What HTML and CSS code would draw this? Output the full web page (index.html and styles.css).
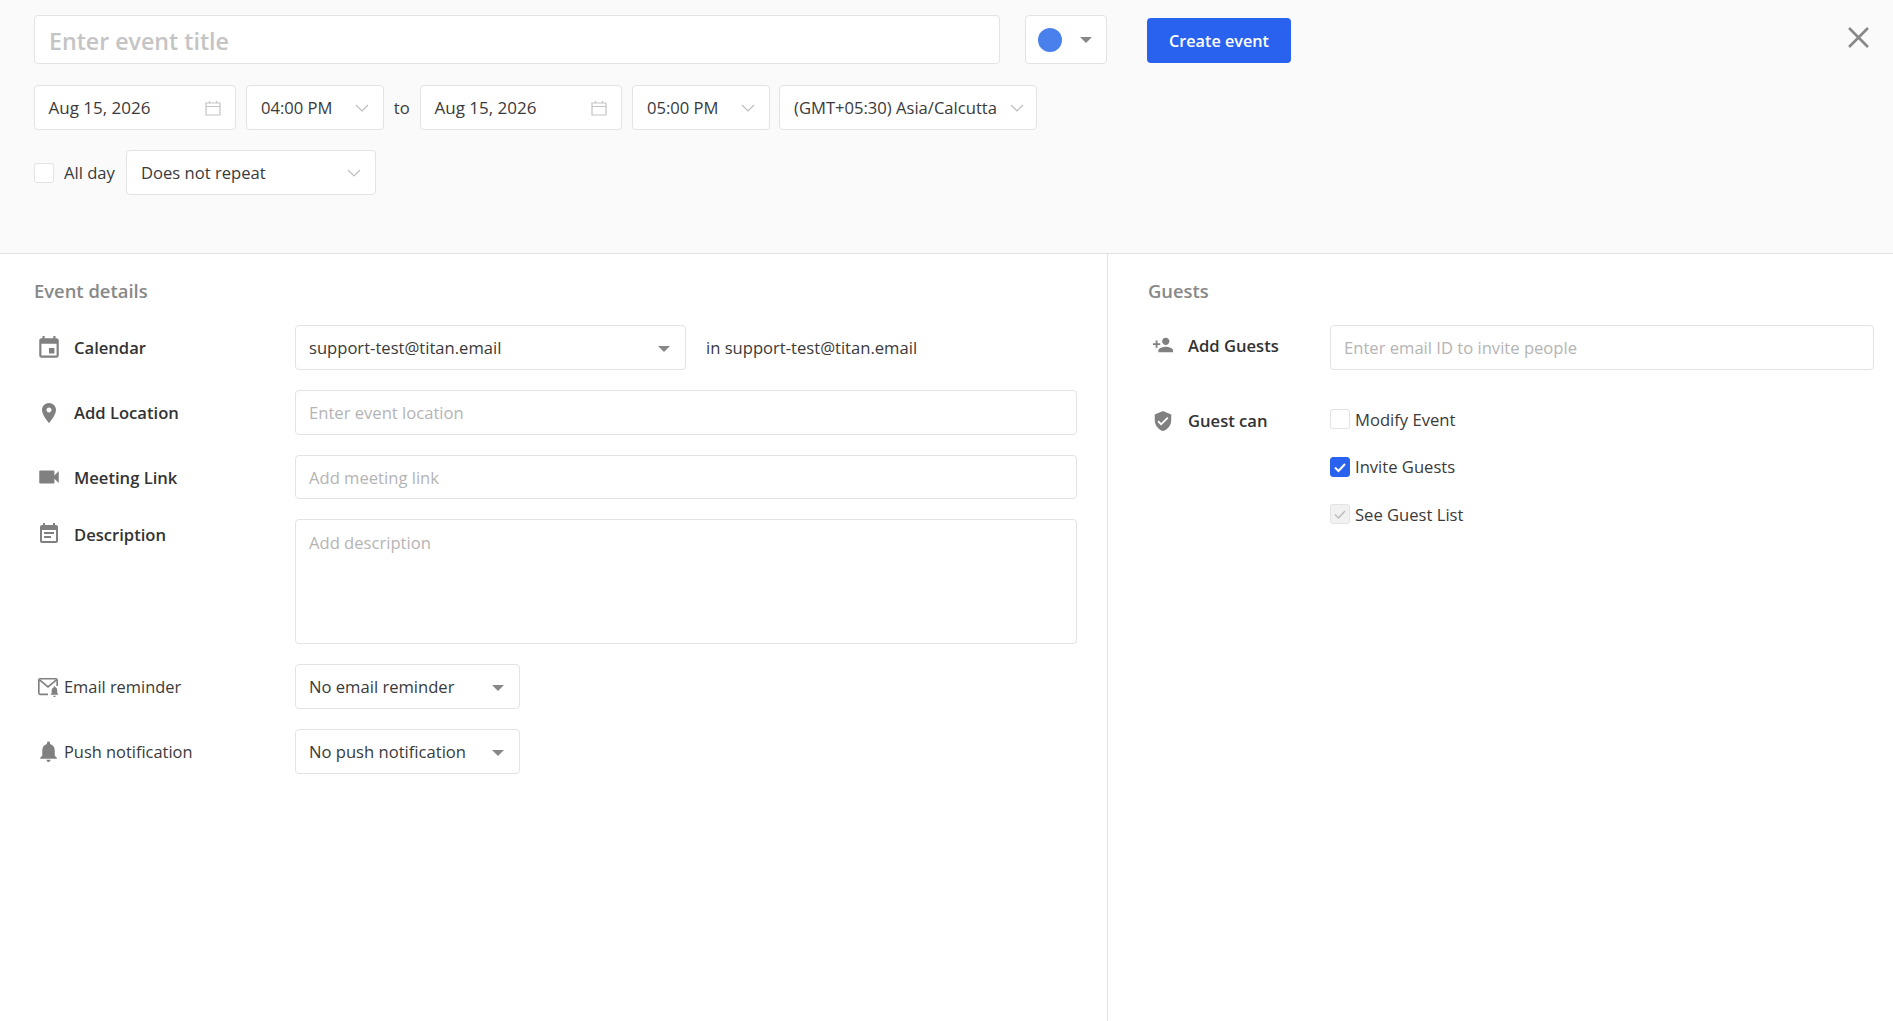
FILE: index.html
```html
<!DOCTYPE html>
<html lang="en">
  <head>
    <meta charset="UTF-8" />
    <meta name="viewport" content="width=device-width, initial-scale=1.0" />
    <title>Create Event</title>
    <link rel="stylesheet" href="styles.css">
  </head>
  <body>
    <header class="top">
      <div class="top-row title-row">
        <input class="field title-input" type="text" placeholder="Enter event title" />
        <div class="field color-picker">
          <span class="color-dot"></span>
          <span class="caret"></span>
        </div>
        <button class="create-btn" type="button">Create event</button>
        <svg class="close-icon" viewBox="0 0 20 20"><path d="M1 1l18 18M19 1L1 19" /></svg>
      </div>

      <div class="top-row date-row">
        <div class="field picker date-picker">
          <span>Aug 15, 2026</span>
          <svg class="cal-icon" viewBox="0 0 16 16"><path d="M1 3h14v12H1zM1 6.5h14M4.5 1v2M11.5 1v2" /></svg>
        </div>
        <div class="field picker time-picker">
          <span>04:00 PM</span>
          <svg class="chevron" viewBox="0 0 14 8"><path d="M1 1l6 6 6-6" /></svg>
        </div>
        <span class="to-label">to</span>
        <div class="field picker date-picker">
          <span>Aug 15, 2026</span>
          <svg class="cal-icon" viewBox="0 0 16 16"><path d="M1 3h14v12H1zM1 6.5h14M4.5 1v2M11.5 1v2" /></svg>
        </div>
        <div class="field picker time-picker">
          <span>05:00 PM</span>
          <svg class="chevron" viewBox="0 0 14 8"><path d="M1 1l6 6 6-6" /></svg>
        </div>
        <div class="field picker zone-picker">
          <span>(GMT+05:30) Asia/Calcutta</span>
          <svg class="chevron" viewBox="0 0 14 8"><path d="M1 1l6 6 6-6" /></svg>
        </div>
      </div>

      <div class="top-row repeat-row">
        <span class="checkbox"></span>
        <span class="allday-label">All day</span>
        <div class="field picker repeat-picker">
          <span>Does not repeat</span>
          <svg class="chevron" viewBox="0 0 14 8"><path d="M1 1l6 6 6-6" /></svg>
        </div>
      </div>
    </header>

    <main class="content">
      <section class="details">
        <h2 class="section-title">Event details</h2>
        <div class="rows">
          <div class="row">
            <div class="row-label">
              <svg class="row-icon" viewBox="0 0 24 24"><path d="M17 12h-5v5h5v-5zM16 1v2H8V1H6v2H5c-1.11 0-1.99.9-1.99 2L3 19c0 1.1.89 2 2 2h14c1.1 0 2-.9 2-2V5c0-1.1-.9-2-2-2h-1V1h-2zm3 18H5V8h14v11z" /></svg>
              <span>Calendar</span>
            </div>
            <div class="field select calendar-select">
              <span>support-test@titan.email</span>
              <span class="caret"></span>
            </div>
            <span class="calendar-note">in support-test@titan.email</span>
          </div>

          <div class="row">
            <div class="row-label">
              <svg class="row-icon row-icon-small" viewBox="0 0 24 24"><path d="M12 2C8.13 2 5 5.13 5 9c0 5.25 7 13 7 13s7-7.75 7-13c0-3.87-3.13-7-7-7zm0 9.5c-1.38 0-2.5-1.12-2.5-2.5s1.12-2.5 2.5-2.5 2.5 1.12 2.5 2.5-1.12 2.5-2.5 2.5z" /></svg>
              <span>Add Location</span>
            </div>
            <input class="field text-input" type="text" placeholder="Enter event location" />
          </div>

          <div class="row row-short">
            <div class="row-label">
              <svg class="row-icon" viewBox="0 0 24 24"><path d="M17 10.5V7c0-.55-.45-1-1-1H4c-.55 0-1 .45-1 1v10c0 .55.45 1 1 1h12c.55 0 1-.45 1-1v-3.5l4 4v-11l-4 4z" /></svg>
              <span>Meeting Link</span>
            </div>
            <input class="field text-input" type="text" placeholder="Add meeting link" />
          </div>

          <div class="row row-top">
            <div class="row-label">
              <svg class="row-icon row-icon-small" viewBox="0 0 24 24"><path d="M17 10H7v2h10v-2zm2-7h-1V1h-2v2H8V1H6v2H5c-1.11 0-1.99.9-1.99 2L3 19c0 1.1.89 2 2 2h14c1.1 0 2-.9 2-2V5c0-1.1-.9-2-2-2zm0 16H5V8h14v11zm-5-5H7v2h7v-2z" /></svg>
              <span>Description</span>
            </div>
            <textarea class="field description" placeholder="Add description"></textarea>
          </div>

          <div class="row">
            <div class="row-label row-label-plain">
              <svg class="mail-icon" viewBox="0 0 24 24">
                <path class="mail-outline" d="M12 20H3.5A1.5 1.5 0 0 1 2 18.5V4.500A1.500 1.500 0 0 1 3.500 3h17A1.500 1.500 0 0 1 22 4.500V11" />
                <path class="mail-outline" d="M2.500 4l9.500 8 9.500-8" />
                <path d="M19 23a1.500 1.500 0 0 0 1.500-1.500h-3A1.500 1.500 0 0 0 19 23zm4-2.500v-1l-1-1v-3c0-1.700-1-3-2.200-3.400V12a.8.8 0 0 0-1.600 0v.6C17 13 16 14.300 16 16v2.500l-1 1v1z" />
              </svg>
              <span>Email reminder</span>
            </div>
            <div class="field select reminder-select">
              <span>No email reminder</span>
              <span class="caret"></span>
            </div>
          </div>

          <div class="row">
            <div class="row-label row-label-plain">
              <svg class="bell-icon" viewBox="0 0 24 24"><path d="M12 22c1.100 0 2-.9 2-2h-4c0 1.100.89 2 2 2zm6-6v-5c0-3.070-1.640-5.640-4.500-6.320V4c0-.83-.67-1.500-1.500-1.500s-1.500.67-1.500 1.500v.68C7.630 5.360 6 7.920 6 11v5l-2 2v1h16v-1l-2-2z" /></svg>
              <span>Push notification</span>
            </div>
            <div class="field select reminder-select">
              <span>No push notification</span>
              <span class="caret"></span>
            </div>
          </div>
        </div>
      </section>

      <section class="guests">
        <h2 class="section-title">Guests</h2>
        <div class="row">
          <div class="guest-label add-guests-label">
            <svg class="guest-icon" viewBox="0 0 24 24"><path d="M15 12c2.210 0 4-1.790 4-4s-1.790-4-4-4-4 1.790-4 4 1.790 4 4 4zm-9-2V7H4v3H1v2h3v3h2v-3h3v-2H6zm9 4c-2.670 0-8 1.340-8 4v2h16v-2c0-2.660-5.330-4-8-4z" /></svg>
            <span>Add Guests</span>
          </div>
          <input class="field text-input" type="text" placeholder="Enter email ID to invite people" />
        </div>

        <div class="guest-can">
          <div class="guest-label">
            <svg class="guest-icon" viewBox="0 0 24 24"><path d="M12 1L3 5v6c0 5.550 3.840 10.740 9 12 5.160-1.260 9-6.450 9-12V5l-9-4zm-2 16l-4-4 1.410-1.410L10 14.170l6.590-6.590L18 9l-8 8z" /></svg>
            <span>Guest can</span>
          </div>
          <div class="options">
            <div class="option">
              <span class="checkbox"></span>
              <span>Modify Event</span>
            </div>
            <div class="option">
              <span class="checkbox checkbox-on">
                <svg viewBox="0 0 20 20"><path d="M5 10.500l3.500 3.500L15 7" /></svg>
              </span>
              <span>Invite Guests</span>
            </div>
            <div class="option">
              <span class="checkbox checkbox-off">
                <svg viewBox="0 0 20 20"><path d="M5 10.500l3.500 3.500L15 7" /></svg>
              </span>
              <span>See Guest List</span>
            </div>
          </div>
        </div>
      </section>
    </main>
  </body>
</html>
```

FILE: styles.css
```css
* {
  box-sizing: border-box;
}
body {
  font-family: "Open Sans", "Noto Sans", sans-serif;
  font-size: 16.6px;
  color: #3a3a3a;
  background-color: white;
  margin: 0;
  height: 1021px;
  display: flex;
  flex-direction: column;
  overflow: hidden;
}
.field {
  background-color: white;
  border: 1px solid #e3e3e3;
  border-radius: 4px;
  font-family: inherit;
  font-size: 16.6px;
  color: #3a3a3a;
}
.field::placeholder {
  color: #b4b4b4;
  opacity: 1;
}
.field:focus {
  outline: none;
}

/* top section */
.top {
  height: 254px;
  flex: none;
  background-color: #fafafa;
  border-bottom: 1px solid #e3e3e3;
  padding: 15px 24px 0 34px;
}
.top-row {
  display: flex;
  align-items: center;
}
.title-input {
  width: 966px;
  height: 49px;
  padding: 2px 14px 0;
  font-size: 23.2px;
  font-weight: 600;
}
.title-input::placeholder {
  color: #c4c4c4;
}
.color-picker {
  width: 82px;
  height: 49px;
  margin-left: 25px;
  display: flex;
  align-items: center;
  padding-left: 12px;
}
.color-dot {
  width: 24px;
  height: 24px;
  border-radius: 50%;
  background-color: #4a80ec;
  margin-right: 18px;
}
.caret {
  width: 0;
  height: 0;
  flex: none;
  margin-top: 3px;
  border-left: 6px solid transparent;
  border-right: 6px solid transparent;
  border-top: 6px solid #888;
}
.color-picker .caret {
  margin-top: 0;
}
.create-btn {
  width: 144px;
  height: 45px;
  margin-left: 40px;
  margin-top: 2px;
  background-color: #2962ee;
  color: white;
  border: none;
  border-radius: 4px;
  font-family: inherit;
  font-size: 16.2px;
  font-weight: 600;
}
.close-icon {
  width: 21px;
  height: 21px;
  margin-left: auto;
  margin-top: -5px;
  fill: none;
  stroke: #888;
  stroke-width: 2.5;
}
.date-row {
  margin-top: 21px;
}
.picker {
  height: 45px;
  display: flex;
  align-items: center;
  justify-content: space-between;
  padding: 0 14px;
}
.date-picker {
  width: 201.5px;
  font-size: 17px;
  padding-left: 13.5px;
}
.time-picker {
  width: 137.5px;
  margin-left: 10.5px;
  padding-right: 14px;
}
.to-label {
  width: 36.5px;
  text-align: center;
}
.zone-picker {
  width: 258px;
  margin-left: 9.5px;
  padding-right: 12px;
  padding-left: 14px;
}
.cal-icon {
  width: 16px;
  height: 16px;
  fill: none;
  stroke: #c4c4c4;
  stroke-width: 1.2;
}
.chevron {
  width: 14px;
  height: 8px;
  fill: none;
  stroke: #bdbdbd;
  stroke-width: 1.2;
}
.repeat-row {
  margin-top: 20px;
}
.checkbox {
  width: 20px;
  height: 20px;
  flex: none;
  background-color: white;
  border: 1px solid #e3e3e3;
  border-radius: 3px;
}
.checkbox svg {
  display: block;
  width: 20px;
  height: 20px;
  margin: -1px;
  fill: none;
  stroke: white;
  stroke-width: 2;
}
.checkbox-on {
  background-color: #2962ee;
  border-color: #2962ee;
}
.checkbox-off {
  background-color: #f1f1f1;
}
.checkbox-off svg {
  stroke: #b8b8b8;
  stroke-width: 1.4;
}
.allday-label {
  margin-left: 10px;
  width: 62px;
}
.repeat-picker {
  width: 250px;
  padding-right: 14px;
}

/* lower section */
.content {
  flex: 1;
  display: flex;
}
.details {
  width: 1108px;
  flex: none;
  border-right: 1px solid #e3e3e3;
  padding: 25px 0 0 34px;
}
.section-title {
  margin: 0 0 23px;
  height: 23px;
  line-height: 23px;
  font-size: 18.4px;
  font-weight: 600;
  color: #888;
}
.rows {
  display: flex;
  flex-direction: column;
  gap: 20px;
}
.row {
  display: flex;
  align-items: center;
  min-height: 45px;
}
.row-short {
  min-height: 44px;
}
.row-short .text-input {
  height: 44px;
}
.row-top {
  align-items: flex-start;
}
.row-label {
  width: 261px;
  flex: none;
  display: flex;
  align-items: center;
  gap: 12px;
  font-weight: 600;
  color: #333;
  padding-left: 2px;
}
.row-top .row-label {
  padding-top: 3px;
}
.row-label-plain {
  font-weight: 400;
  font-size: 16.4px;
  color: #3a3a3a;
  gap: 4px;
  padding-left: 3px;
}
.row-icon {
  width: 26px;
  height: 26px;
  flex: none;
  fill: #808080;
}
.row-icon-small {
  width: 24px;
  height: 24px;
  margin: 0 1px;
}
.mail-icon {
  width: 22px;
  height: 22px;
  margin-right: 1px;
  flex: none;
  fill: #808080;
}
.mail-outline {
  fill: none;
  stroke: #808080;
  stroke-width: 1.8;
}
.bell-icon {
  width: 25px;
  height: 25px;
  margin: 0 -1px;
  flex: none;
  fill: #808080;
}
.select {
  height: 45px;
  display: flex;
  align-items: center;
  justify-content: space-between;
  padding: 0 15px 0 13px;
}
.calendar-select {
  width: 391px;
}
.calendar-note {
  margin-left: 20px;
}
.reminder-select {
  width: 225px;
}
.text-input {
  width: 782px;
  height: 45px;
  padding: 0 13px;
}
.description {
  display: block;
  width: 782px;
  height: 125px;
  padding: 11px 13px;
  resize: none;
}
.guests {
  flex: 1;
  padding: 25px 19px 0 40px;
}
.guests .text-input {
  width: 544px;
}
.guest-label {
  width: 182px;
  flex: none;
  display: flex;
  align-items: center;
  gap: 14px;
  font-weight: 600;
  color: #333;
  padding-left: 4px;
}
.add-guests-label {
  margin-top: -5px;
}
.guest-icon {
  width: 22px;
  height: 22px;
  flex: none;
  fill: #808080;
}
.guest-can {
  display: flex;
  align-items: flex-start;
  margin-top: 39px;
}
.options {
  display: flex;
  flex-direction: column;
  gap: 27.5px;
}
.option {
  display: flex;
  align-items: center;
  gap: 5px;
  height: 20px;
}
```
